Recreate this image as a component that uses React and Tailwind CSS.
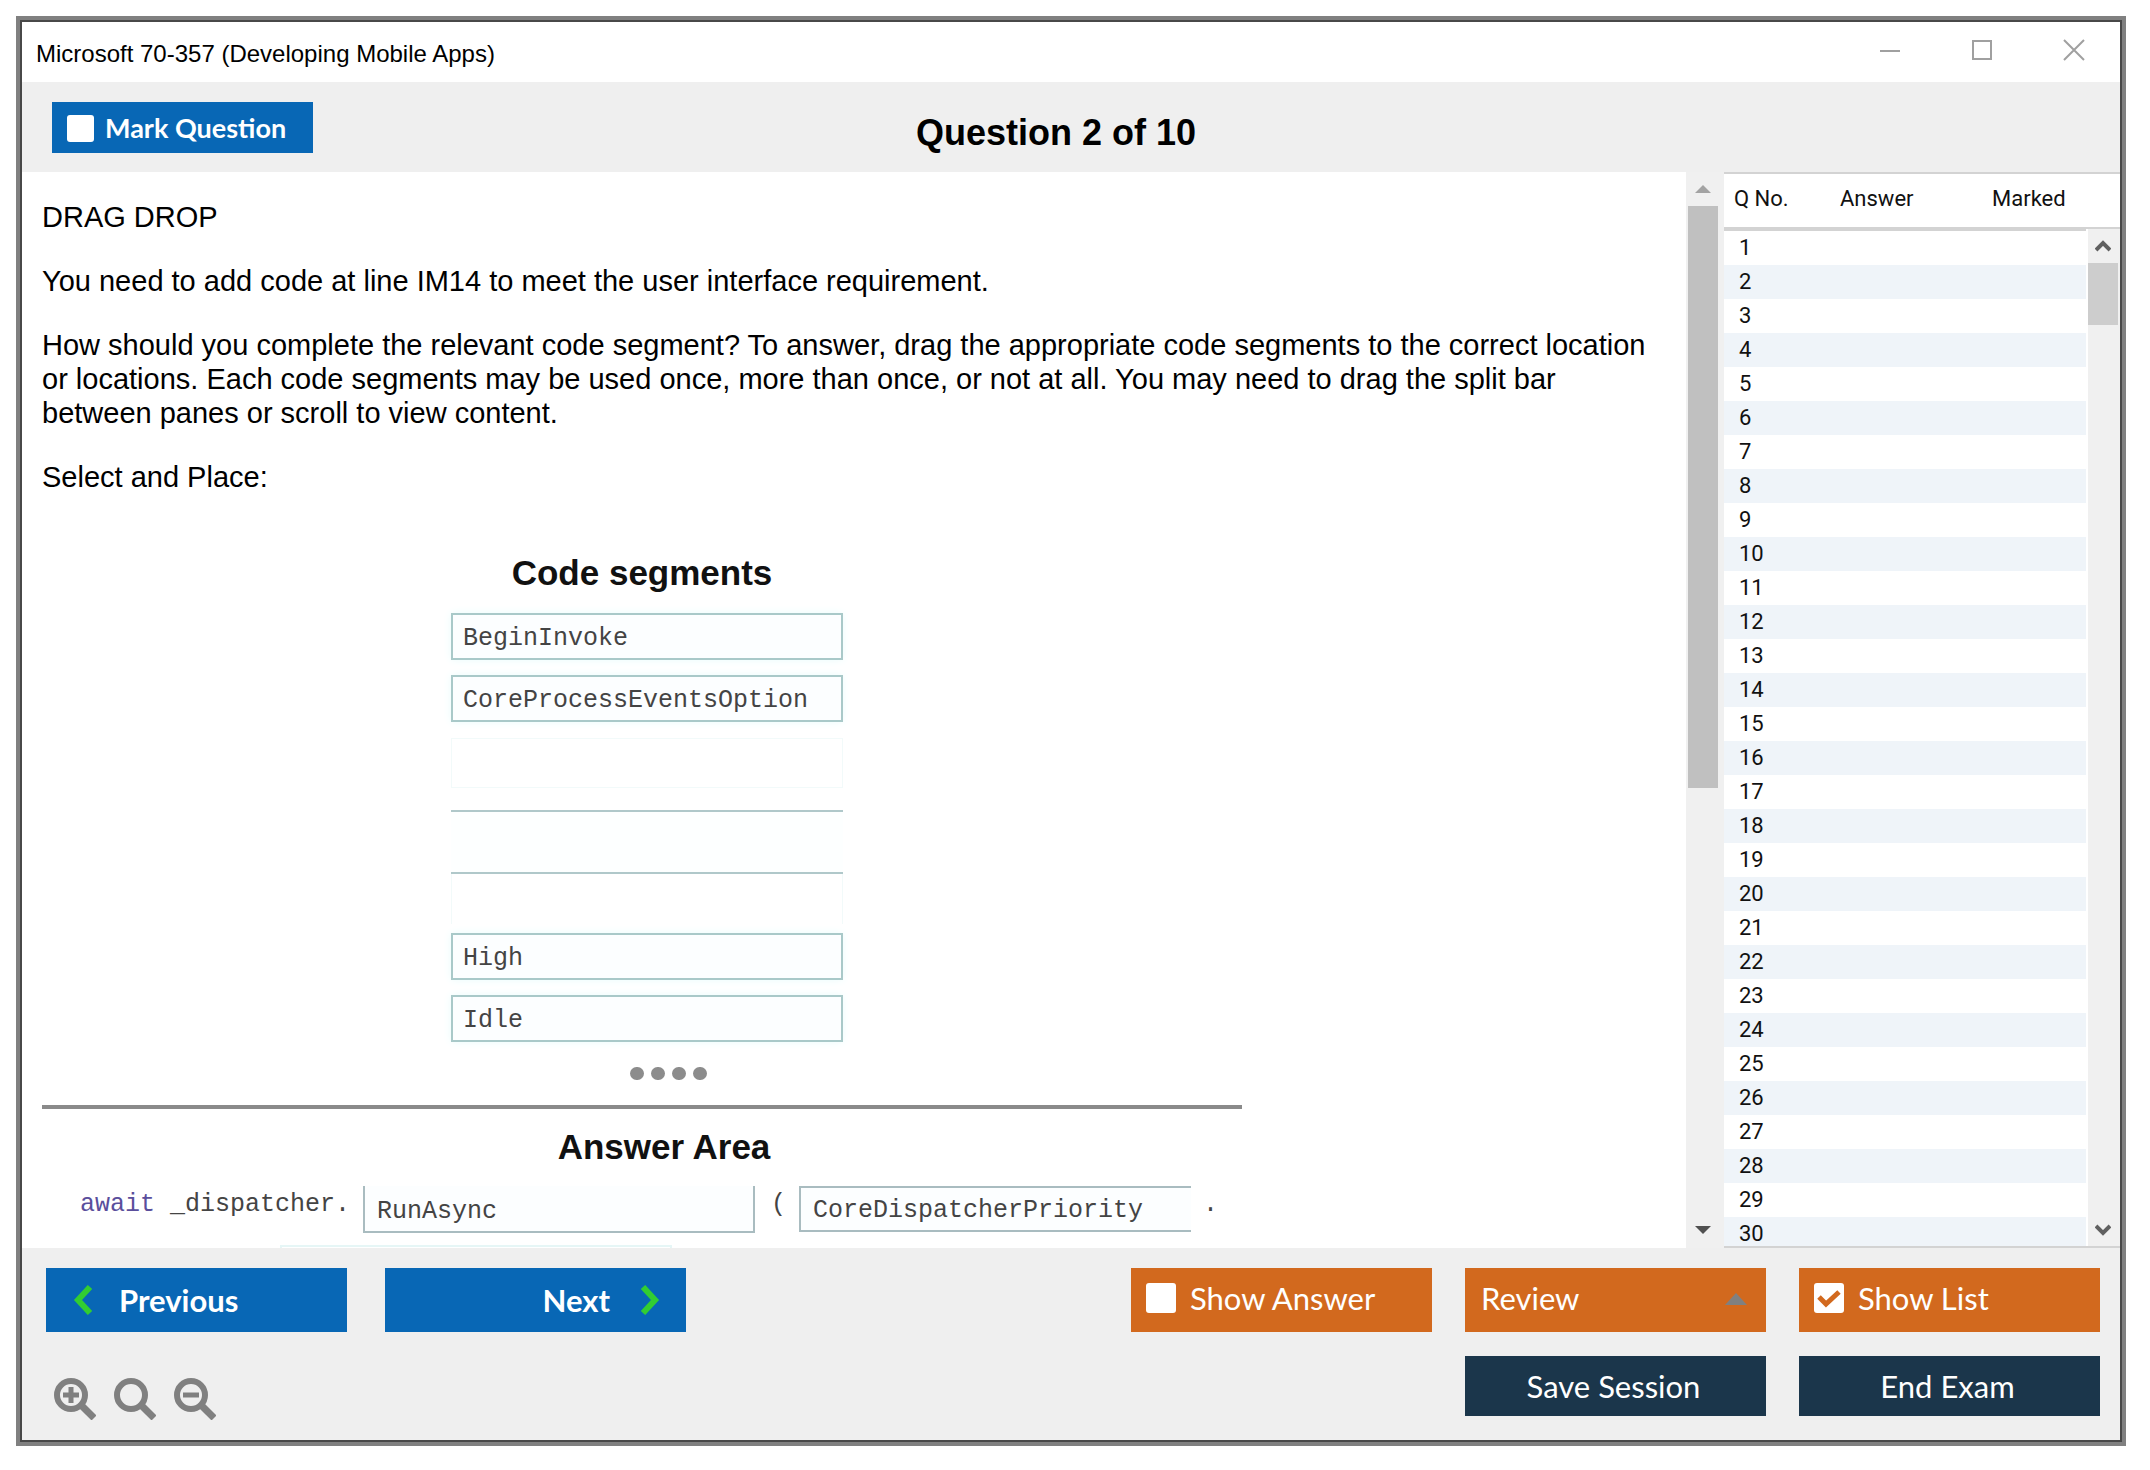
import { useState } from "react";

const QUESTIONS = Array.from({ length: 30 }, (_, i) => i + 1);

function SegmentBox({ children }) {
  return (
    <div
      draggable
      className="flex h-[47px] w-[392px] shrink-0 items-center border-2 border-[#a9c9c9] bg-[#fcfeff] pt-1 pl-2.5 shadow-[0_0_8px_#eafcfc]"
    >
      {children}
    </div>
  );
}

function CheckButton({ id, label, checked, onChange, className, boxClass }) {
  return (
    <label htmlFor={id} className={`flex cursor-pointer items-center text-white ${className}`}>
      <span className="relative flex shrink-0">
        <input
          id={id}
          type="checkbox"
          checked={checked}
          onChange={(e) => onChange(e.target.checked)}
          className={`appearance-none rounded-[3px] bg-white ${boxClass}`}
        />
        {checked && (
          <svg viewBox="0 0 30 30" className="pointer-events-none absolute inset-0 h-full w-full" fill="none" stroke="#d2691e" strokeWidth="5">
            <path d="M5 14l7 7L25 9" />
          </svg>
        )}
      </span>
      <span>{label}</span>
    </label>
  );
}

function ZoomIcon({ label, mark }) {
  return (
    <button type="button" aria-label={label} className="h-[42px] w-[42px]">
      <svg viewBox="0 0 42 42" className="h-full w-full" fill="none" stroke="#808080">
        <circle cx="17" cy="17" r="14" strokeWidth="6" />
        <path d="M27 27l13 13" strokeWidth="7" />
        {mark && <path d={mark} strokeWidth="5" />}
      </svg>
    </button>
  );
}

function ContentScrollbar() {
  return (
    <div className="flex w-[38px] shrink-0 flex-col bg-[#f0f0f0] pl-0.5">
      <div className="flex h-[34px] w-[30px] items-center justify-center">
        <svg viewBox="0 0 16 8" className="h-2 w-4" fill="#a3a3a3">
          <path d="M0 8L8 0l8 8z" />
        </svg>
      </div>
      <div className="h-[582px] w-[30px] bg-[#c0c0c0]" />
      <div className="mt-auto flex h-9 w-[30px] items-center justify-center">
        <svg viewBox="0 0 16 8" className="h-2 w-4" fill="#505050">
          <path d="M0 0h16L8 8z" />
        </svg>
      </div>
    </div>
  );
}

function ListScrollbar() {
  return (
    <div className="flex w-[32px] shrink-0 flex-col bg-[#f0f0f0] pr-0.5">
      <div className="flex h-[34px] items-center justify-center">
        <svg viewBox="0 0 16 12" className="h-3 w-4" fill="none" stroke="#606060" strokeWidth="4">
          <path d="M1 10l7-7 7 7" />
        </svg>
      </div>
      <div className="h-[62px] bg-[#cdcdcd]" />
      <div className="mt-auto flex h-8 items-center justify-center">
        <svg viewBox="0 0 16 12" className="h-3 w-4" fill="none" stroke="#606060" strokeWidth="4">
          <path d="M1 2l7 7 7-7" />
        </svg>
      </div>
    </div>
  );
}

function QuestionList() {
  return (
    <div className="flex w-[396px] shrink-0 flex-col overflow-hidden border-y-2 border-[#d3d3d3] bg-white font-[Roboto,sans-serif] text-[22px] text-[#111]">
      <div className="flex min-h-0 flex-1">
        <div className="min-w-0 flex-1 overflow-visible">
          <table className="w-[396px] table-fixed border-collapse text-left">
            <thead>
              <tr className="h-[55px] border-b-4 border-[#d3d3d3]">
                <th className="w-[100px] pb-1 pl-2.5 font-normal">Q No.</th>
                <th className="w-[150px] pb-1 pl-4 font-normal">Answer</th>
                <th className="pb-1 pl-[18px] font-normal">Marked</th>
              </tr>
            </thead>
            <tbody>
              {QUESTIONS.map((n) => (
                <tr key={n} className="h-[34px] even:bg-[#eff4f9]">
                  <td className="p-0 pl-[15px] leading-[34px]">{n}</td>
                  <td />
                  <td />
                </tr>
              ))}
            </tbody>
          </table>
        </div>
        <div className="relative mt-[55px] flex border-l-2 border-white">
          <ListScrollbar />
        </div>
      </div>
    </div>
  );
}

function Figure() {
  return (
    <div className="mt-[59px] w-full max-w-[1200px]">
      <h2 className="text-center font-bold text-[35px] leading-10 text-[#111]">Code segments</h2>
      <div className="mt-5 flex flex-col items-center pl-2.5 font-['Liberation_Mono',monospace] text-[25px] text-[#444]">
        <SegmentBox>BeginInvoke</SegmentBox>
        <div className="h-[15px]" />
        <SegmentBox>CoreProcessEventsOption</SegmentBox>
        <div className="mt-4 h-[50px] w-[392px] border border-[#f2fafa]" />
        <div className="mt-[22px] h-[64px] w-[392px] border-y-2 border-[#b0c8ca] bg-[#fdffff]" />
        <div className="h-[50px] w-[392px] border-x border-[#f2fafa]" />
        <div className="h-[9px]" />
        <SegmentBox>High</SegmentBox>
        <div className="h-[15px]" />
        <SegmentBox>Idle</SegmentBox>
      </div>
      <div className="mt-[25px] flex justify-center gap-[7px] pl-[52px]">
        {[0, 1, 2, 3].map((dot) => (
          <span key={dot} className="h-[13px] w-[14px] rounded-full bg-[#8c8c8c]" />
        ))}
      </div>
      <hr className="mt-[25px] border-t-4 border-[#8a8a8a]" />
      <h2 className="mt-[18px] pl-11 text-center font-bold text-[35px] leading-10 text-[#111]">Answer Area</h2>
      <div className="mt-[19px] flex items-start font-['Liberation_Mono',monospace] text-[25px] leading-[38px] text-[#444]">
        <p className="w-[321px] shrink-0 pl-[38px] whitespace-nowrap">
          <span className="text-[#5a4e9c]">await</span> _dispatcher.
        </p>
        <div className="flex h-[47px] w-[392px] shrink-0 items-center border-2 border-t-0 border-[#a9bcc0] bg-[#fcfeff] pt-1.5 pl-3">RunAsync</div>
        <span className="w-[44px] shrink-0 pl-4">(</span>
        <div className="flex h-[46px] w-[392px] shrink-0 items-center border-2 border-r-0 border-[#a9bcc0] bg-[#fcfeff] pt-1 pl-3">
          CoreDispatcherPriority
        </div>
        <span className="pl-3">.</span>
      </div>
      <div className="mt-3 ml-[238px] h-10 w-[392px] border-2 border-[#e6f6f6]" />
    </div>
  );
}

export default function App() {
  const [marked, setMarked] = useState(false);
  const [showAnswer, setShowAnswer] = useState(false);
  const [showList, setShowList] = useState(true);

  return (
    <div className="flex h-screen bg-white pt-4 pr-6 pb-6 pl-4 font-['Liberation_Sans',Arial,sans-serif] text-black">
      <div className="flex min-w-0 flex-1 border-4 border-[#808080]">
        <div className="flex min-w-0 flex-1 flex-col border-2 border-[#484848] bg-[#efefef]">
          <header className="flex h-[60px] shrink-0 items-center justify-between bg-white pr-[35px] pl-3.5">
            <h1 className="pt-1 text-[24px]">Microsoft 70-357 (Developing Mobile Apps)</h1>
            <div className="flex items-center gap-[70px] pb-1">
              <button type="button" aria-label="Minimize" className="h-[22px] w-[22px]">
                <svg viewBox="0 0 22 22" fill="none" stroke="#a0a0a0" strokeWidth="2">
                  <path d="M1 12h20" />
                </svg>
              </button>
              <button type="button" aria-label="Maximize" className="h-[22px] w-[22px]">
                <svg viewBox="0 0 22 22" fill="none" stroke="#a0a0a0" strokeWidth="2">
                  <path d="M2 2h18v18H2z" />
                </svg>
              </button>
              <button type="button" aria-label="Close" className="h-[22px] w-[22px]">
                <svg viewBox="0 0 22 22" fill="none" stroke="#a0a0a0" strokeWidth="2">
                  <path d="M1 1l20 20M21 1L1 21" />
                </svg>
              </button>
            </div>
          </header>

          <div className="grid h-[90px] shrink-0 grid-cols-[1fr_auto_1fr] items-center pr-[60px] pl-[30px]">
            <CheckButton
              id="mark"
              label="Mark Question"
              checked={marked}
              onChange={setMarked}
              className="h-[51px] w-[261px] gap-[11px] bg-[#0867b5] pt-0.5 pl-[15px] font-[Lato,sans-serif] text-[27px] font-bold"
              boxClass="h-[27px] w-[27px]"
            />
            <h2 className="pt-3 text-[36px] leading-10 font-bold">Question 2 of 10</h2>
            <span />
          </div>

          <main className="flex min-h-0 flex-1">
            <section className="min-w-0 flex-1 overflow-hidden bg-white pt-7 pr-5 pl-5 text-[29px] leading-[34px]">
              <div className="space-y-[30px]">
                <p>DRAG DROP</p>
                <p>You need to add code at line IM14 to meet the user interface requirement.</p>
                <p>
                  How should you complete the relevant code segment? To answer, drag the appropriate code segments to the correct location or
                  locations. Each code segments may be used once, more than once, or not at all. You may need to drag the split bar between
                  panes or scroll to view content.
                </p>
                <p>Select and Place:</p>
              </div>
              <Figure />
            </section>
            <ContentScrollbar />
            {showList && <QuestionList />}
          </main>

          <footer className="h-[192px] shrink-0 pt-5 pr-5 pl-6 font-[Lato,sans-serif] text-[31px] text-white">
            <div className="flex h-16 justify-between">
              <div className="flex gap-[38px]">
                <button type="button" className="flex w-[301px] items-center bg-[#0867b5] pl-[27px] font-bold">
                  <svg viewBox="0 0 20 30" className="mr-[26px] h-[30px] w-5" fill="none" stroke="#32cd32" strokeWidth="6">
                    <path d="M17 2L5 15l12 13" />
                  </svg>
                  Previous
                </button>
                <button type="button" className="flex w-[301px] items-center justify-end bg-[#0867b5] pr-[26px] font-bold">
                  Next
                  <svg viewBox="0 0 20 30" className="ml-[30px] h-[30px] w-5" fill="none" stroke="#32cd32" strokeWidth="6">
                    <path d="M3 2l12 13L3 28" />
                  </svg>
                </button>
              </div>
              <div className="flex gap-[33px]">
                <CheckButton
                  id="show-answer"
                  label="Show Answer"
                  checked={showAnswer}
                  onChange={setShowAnswer}
                  className="w-[301px] gap-[14px] bg-[#d2691e] pb-1 pl-[15px]"
                  boxClass="h-[30px] w-[30px]"
                />
                <div className="relative w-[301px]">
                  <select aria-label="Review" className="h-full w-full appearance-none bg-[#d2691e] pb-1 pl-4">
                    <option>Review</option>
                  </select>
                  <svg viewBox="0 0 22 12" className="pointer-events-none absolute top-[25px] right-[19px] h-3 w-[22px]" fill="#808080">
                    <path d="M0 12L11 0l11 12z" />
                  </svg>
                </div>
                <CheckButton
                  id="show-list"
                  label="Show List"
                  checked={showList}
                  onChange={setShowList}
                  className="w-[301px] gap-[14px] bg-[#d2691e] pb-1 pl-[15px]"
                  boxClass="h-[30px] w-[30px]"
                />
              </div>
            </div>
            <div className="mt-6 flex h-16 items-start justify-between">
              <div className="flex items-end gap-[18px] self-end pl-2">
                <ZoomIcon label="Zoom in" mark="M17 9v16M9 17h16" />
                <ZoomIcon label="Reset zoom" />
                <ZoomIcon label="Zoom out" mark="M9 17h16" />
              </div>
              <div className="flex h-[60px] gap-[33px]">
                <button type="button" className="w-[301px] bg-[#1b364b] pr-1">
                  Save Session
                </button>
                <button type="button" className="w-[301px] bg-[#1b364b] pr-1">
                  End Exam
                </button>
              </div>
            </div>
          </footer>
        </div>
      </div>
    </div>
  );
}
